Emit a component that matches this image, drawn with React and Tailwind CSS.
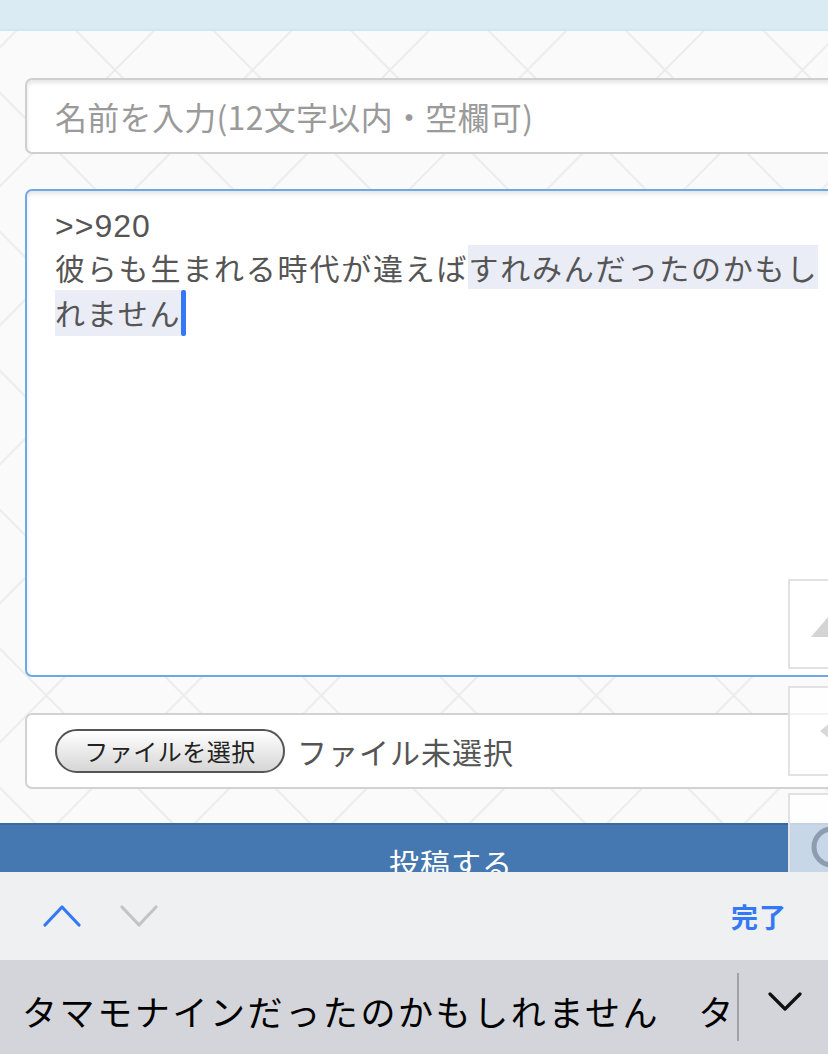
import React from "react";

function Pattern() {
  return (
    <svg className="absolute inset-0 w-full h-full" xmlns="http://www.w3.org/2000/svg">
      <defs>
        <pattern id="lat" x="115" y="70" width="137.5" height="139" patternUnits="userSpaceOnUse">
          <line x1="0" y1="0" x2="137.5" y2="139" stroke="#ececec" strokeWidth="2" />
          <line x1="137.5" y1="0" x2="0" y2="139" stroke="#ececec" strokeWidth="2" />
        </pattern>
      </defs>
      <rect width="100%" height="100%" fill="url(#lat)" />
    </svg>
  );
}

export default function App() {
  return (
    <div className="w-[828px] h-[1054px] overflow-hidden flex flex-col font-['Noto_Sans_CJK_JP','Noto_Sans',sans-serif]">
      <div className="relative h-[872px] shrink-0 overflow-hidden bg-[#fafafa]">
        <Pattern />
        <div className="relative flex flex-col">
          <div className="h-[29px] bg-[#dbebf4] border-b-2 border-[#cfe7f0] box-content" />
          {/* name input */}
          <div className="mt-[47px] ml-[25px] w-[852px] h-[76px] shrink-0 rounded-[7px] border-2 border-[#cfcfcf] bg-white shadow-[inset_0_3px_4px_rgba(0,0,0,0.10)] flex items-center pl-[28px]">
            <span className="text-[32px] leading-none tracking-[0.3px] text-[#9a9a9a] whitespace-nowrap">名前を入力(12文字以内・空欄可)</span>
          </div>
          {/* textarea */}
          <div className="mt-[35px] ml-[25px] w-[852px] h-[488px] shrink-0 rounded-[7px] border-2 border-[#6fa8e6] bg-white shadow-[inset_0_3px_4px_rgba(0,0,0,0.10)] pt-[8px] pl-[28px] text-[30px] leading-[45.5px] tracking-[1.8px] text-[#555555] whitespace-nowrap">
            <div className="font-['Liberation_Sans',sans-serif] text-[32px] tracking-[1px] translate-y-[5px]">&gt;&gt;920</div>
            <div>
              彼らも生まれる時代が違えば<span className="bg-[#eaecf6]">すれみんだったのかもし</span>
            </div>
            <div className="flex items-center">
              <span className="bg-[#eaecf6]">れません</span>
              <span className="inline-block w-[5px] h-[46px] rounded-[2px] bg-[#3478f6]" />
            </div>
          </div>
          {/* file box */}
          <div className="mt-[36px] ml-[25px] w-[852px] h-[76px] shrink-0 rounded-[7px] border-2 border-[#d2d2d2] bg-white flex items-center pl-[28px] gap-[12px]">
            <div className="w-[230px] h-[44px] rounded-full border-2 border-[#555555] bg-gradient-to-b from-white to-[#d6d6d6] flex items-center justify-center text-[24px] leading-none tracking-[0.5px] text-[#222222]">
              ファイルを選択
            </div>
            <span className="text-[30px] leading-none tracking-[1px] text-[#555555] whitespace-nowrap">ファイル未選択</span>
          </div>
          {/* submit */}
          <div className="mt-[34px] w-[902px] h-[76px] shrink-0 bg-[#4578b0] border-t-2 border-[#3b6aa0] flex items-center justify-center text-[30px] leading-none text-white tracking-[1px]">
            投稿する
          </div>
        </div>
        {/* floating buttons */}
        <div className="absolute left-[788px] top-[579px] flex flex-col gap-[17px]">
          <div className="w-[90px] h-[90px] border-2 border-[#e2e2e2] bg-white/70 flex items-center justify-center">
            <svg width="44" height="26" viewBox="0 0 44 26"><polygon points="0,26 22,0 44,26" fill="#d4d4d4" /></svg>
          </div>
          <div className="w-[90px] h-[90px] border-2 border-[#e2e2e2] bg-white/70 flex items-center pl-[30px]">
            <svg width="30" height="30" viewBox="0 0 30 30"><polygon points="0,15 15,3 15,27" fill="#d8d8d8" /></svg>
          </div>
          <div className="w-[90px] h-[90px] border-2 border-[#e2e2e2] bg-white/70 flex items-start pt-[30px] pl-[20px]">
            <svg width="44" height="44" viewBox="0 0 44 44"><circle cx="22" cy="22" r="18" fill="none" stroke="#8c9db1" strokeWidth="5" /></svg>
          </div>
        </div>
      </div>
      {/* keyboard toolbar */}
      <div className="h-[88px] shrink-0 bg-[#eff0f2] flex items-center pl-[43px] pr-[41px]">
        <svg width="38" height="22" viewBox="0 0 38 22" className="mt-[-1px]">
          <polyline points="2,20 19,2 36,20" fill="none" stroke="#3478f6" strokeWidth="3.2" strokeLinecap="round" strokeLinejoin="round" />
        </svg>
        <svg width="38" height="22" viewBox="0 0 38 22" className="ml-[39px] mt-[-1px]">
          <polyline points="2,2 19,20 36,2" fill="none" stroke="#c4c4c6" strokeWidth="3.2" strokeLinecap="round" strokeLinejoin="round" />
        </svg>
        <div className="flex-1" />
        <span className="text-[27px] font-bold leading-none text-[#3478f6] tracking-[1px]">完了</span>
      </div>
      {/* prediction bar */}
      <div className="h-[94px] shrink-0 bg-[#d3d5da] flex items-center pl-[22px]">
        <span className="text-[35px] leading-none tracking-[2.6px] text-black whitespace-nowrap mt-[6px]">タマモナインだったのかもしれません</span>
        <span className="ml-[38px] text-[35px] leading-none text-black mt-[6px]">タ</span>
        <div className="ml-[4px] w-[2px] h-[68px] bg-[#a0a2a6]" />
        <svg width="34" height="20" viewBox="0 0 34 20" className="ml-[29px] mt-[-10px]">
          <polyline points="2,2 17,17 32,2" fill="none" stroke="#111111" strokeWidth="3.2" strokeLinecap="round" strokeLinejoin="round" />
        </svg>
      </div>
    </div>
  );
}
